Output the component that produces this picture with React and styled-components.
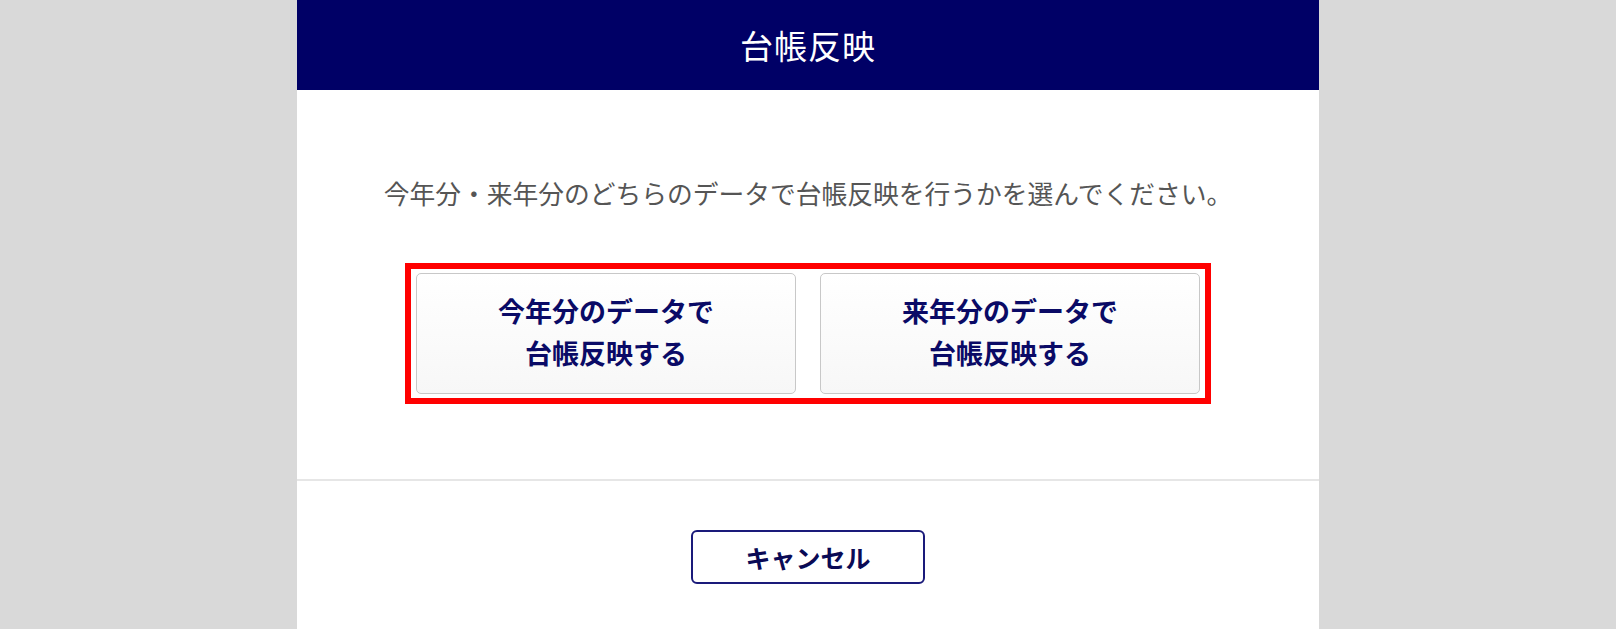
import React from "react";
import styled, { createGlobalStyle } from "styled-components";

const GlobalStyle = createGlobalStyle`
  html, body {
    margin: 0;
    padding: 0;
    background: #d9d9d9;
    font-family: "Noto Sans CJK JP", "Noto Sans", sans-serif;
  }
  * { box-sizing: border-box; }
`;

const Page = styled.div`
  display: flex;
  justify-content: center;
  min-height: 629px;
  background: #d9d9d9;
`;

const Dialog = styled.div`
  width: 1022px;
  background: #ffffff;
  display: flex;
  flex-direction: column;
`;

const Header = styled.header`
  height: 90px;
  background: #000066;
  color: #ffffff;
  display: flex;
  align-items: center;
  justify-content: center;
  font-size: 33px;
  font-weight: 400;
  letter-spacing: 1px;
`;

const Body = styled.section`
  padding: 85px 0 75px;
  display: flex;
  flex-direction: column;
  align-items: center;
`;

const Message = styled.p`
  margin: 0;
  font-size: 25.75px;
  line-height: 36px;
  color: #555555;
  font-weight: 400;
`;

const Highlight = styled.div`
  margin-top: 52px;
  border: 6px solid #ff0000;
  padding: 4px 5px;
  display: flex;
  gap: 24px;
`;

const ChoiceButton = styled.button`
  width: 380px;
  height: 121px;
  border: 1px solid #c8c8c8;
  border-radius: 5px;
  background: linear-gradient(#ffffff, #f7f7f7);
  color: #0a0a66;
  font-family: inherit;
  font-size: 27px;
  font-weight: 700;
  line-height: 42px;
  display: flex;
  flex-direction: column;
  align-items: center;
  justify-content: center;
  padding: 0 0 4px;
  cursor: pointer;
`;

const Divider = styled.hr`
  margin: 0;
  border: none;
  border-top: 2px solid #e6e6e6;
`;

const Footer = styled.footer`
  padding: 49px 0 48px;
  display: flex;
  justify-content: center;
`;

const CancelButton = styled.button`
  width: 234px;
  height: 54px;
  border: 2px solid #1a1a7a;
  border-radius: 6px;
  background: #ffffff;
  color: #0a0a55;
  font-family: inherit;
  font-size: 25px;
  font-weight: 700;
  display: flex;
  align-items: center;
  justify-content: center;
  cursor: pointer;
`;

const choices = [
  ["今年分のデータで", "台帳反映する"],
  ["来年分のデータで", "台帳反映する"],
];

export default function App() {
  return (
    <>
      <GlobalStyle />
      <Page>
        <Dialog>
          <Header>台帳反映</Header>
          <Body>
            <Message>今年分・来年分のどちらのデータで台帳反映を行うかを選んでください。</Message>
            <Highlight>
              {choices.map((lines, i) => (
                <ChoiceButton key={i}>
                  {lines.map((l) => (
                    <span key={l}>{l}</span>
                  ))}
                </ChoiceButton>
              ))}
            </Highlight>
          </Body>
          <Divider />
          <Footer>
            <CancelButton>キャンセル</CancelButton>
          </Footer>
        </Dialog>
      </Page>
    </>
  );
}
